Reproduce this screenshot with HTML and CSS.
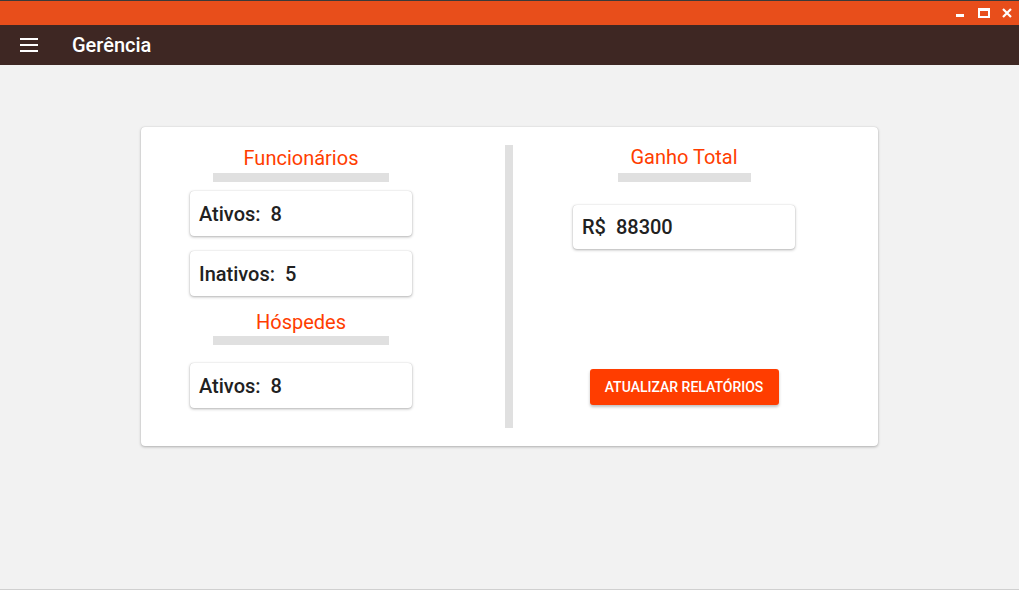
FILE: index.html
```html
<!DOCTYPE html>
<html lang="pt">
<head>
<meta charset="utf-8">
<title>Gerência</title>
<link rel="stylesheet" href="styles.css">
</head>
<body>
<div class="window">
  <div class="titlebar">
    <div class="controls">
      <svg class="ctl" width="10" height="10" viewBox="0 0 10 10"><rect x="1" y="6" width="8" height="3" fill="#fff"/></svg>
      <svg class="ctl" width="12" height="10" viewBox="0 0 12 10"><rect x="1" y="1" width="10" height="8" fill="none" stroke="#fff" stroke-width="2"/><rect x="0" y="0" width="12" height="3" fill="#fff"/></svg>
      <svg class="ctl" width="10" height="10" viewBox="0 0 10 10"><path d="M1 1 L9 9 M9 1 L1 9" stroke="#fff" stroke-width="2.2"/></svg>
    </div>
  </div>
  <header class="appbar">
    <svg class="menu" width="18" height="14" viewBox="0 0 18 14"><rect y="0" width="18" height="2" fill="#fff"/><rect y="6" width="18" height="2" fill="#fff"/><rect y="12" width="18" height="2" fill="#fff"/></svg>
    <span class="appbar-title">Gerência</span>
  </header>
  <main class="content">
    <section class="card">
      <div class="col col-left">
        <h2 class="heading h-func">Funcionários</h2>
        <div class="bar bar-left"></div>
        <div class="stat s1">Ativos:&nbsp;&nbsp;8</div>
        <div class="stat s2">Inativos:&nbsp;&nbsp;5</div>
        <h2 class="heading h-hosp">Hóspedes</h2>
        <div class="bar bar-left bar-hosp"></div>
        <div class="stat s3">Ativos:&nbsp;&nbsp;8</div>
      </div>
      <div class="divider"></div>
      <div class="col col-right">
        <h2 class="heading h-ganho">Ganho Total</h2>
        <div class="bar bar-right"></div>
        <div class="stat s-total">R$&nbsp;&nbsp;88300</div>
        <button class="btn">ATUALIZAR RELATÓRIOS</button>
      </div>
    </section>
  </main>
</div>
</body>
</html>
```
FILE: styles.css
```css
* { box-sizing: border-box; }
html, body { margin: 0; padding: 0; }
body {
  font-family: Roboto, "Noto Sans", "Liberation Sans", sans-serif;
  background: #f2f2f2;
}
.window {
  height: 590px;
  display: flex;
  flex-direction: column;
  border-bottom: 1px solid #d0d0d0;
}
.titlebar {
  height: 25px;
  background: #e84e1b;
  border-top: 1px solid #3a3a3a;
  display: flex;
  justify-content: flex-end;
}
.controls {
  display: flex;
  align-items: flex-start;
  padding-top: 7px;
  padding-right: 7px;
}
.ctl { display: block; }
.controls .ctl:nth-child(1) { margin-right: 13px; }
.controls .ctl:nth-child(2) { margin-right: 12px; }
.appbar {
  height: 40px;
  background: #3e2723;
  display: flex;
  align-items: center;
  padding-left: 20px;
}
.menu { display: block; }
.appbar-title {
  color: #fff;
  font-size: 20px;
  font-weight: 500;
  margin-left: 34px;
}
.content {
  flex: 1;
  padding: 62px 0 0 141px;
}
.card {
  width: 737px;
  height: 319px;
  background: #fff;
  border-radius: 4px;
  box-shadow: 0 1px 3px rgba(0,0,0,0.28), 0 0 1px rgba(0,0,0,0.18);
  display: flex;
  padding: 18px 0 18px 20px;
}
.col {
  display: flex;
  flex-direction: column;
  align-items: center;
}
.col-left { width: 280px; }
.divider {
  width: 8px;
  background: #e0e0e0;
  margin-left: 64px;
}
.col-right { width: 342px; }
.heading {
  margin: 0;
  font-size: 20px;
  font-weight: 400;
  line-height: 24px;
  color: #ff3d00;
}
.h-func { margin-top: 1px; }
.h-hosp { margin-top: 14px; }
.bar {
  height: 9px;
  background: #e0e0e0;
  margin-top: 3px;
}
.bar-left { width: 176px; }
.bar-hosp { margin-top: 2px; }
.bar-right { width: 133px; margin-top: 4px; }
.stat {
  width: 222px;
  height: 45px;
  border-radius: 4px;
  background: #fff;
  box-shadow: 0 1px 3px rgba(0,0,0,0.3), 0 0 1px rgba(0,0,0,0.2);
  display: flex;
  align-items: center;
  padding-left: 9px;
  font-size: 20px;
  font-weight: 500;
  color: #212121;
}
.s1 { margin-top: 9px; }
.s2 { margin-top: 15px; }
.s3 { margin-top: 18px; }
.s-total { margin-top: 23px; height: 44px; }
.btn {
  margin-top: 120px;
  width: 189px;
  height: 36px;
  border: none;
  border-radius: 3px;
  background: #ff3d00;
  color: #fff;
  font-family: Roboto, "Noto Sans", sans-serif;
  font-size: 14px;
  font-weight: 500;
  box-shadow: 0 2px 3px rgba(0,0,0,0.25);
  padding: 0;
}
```
